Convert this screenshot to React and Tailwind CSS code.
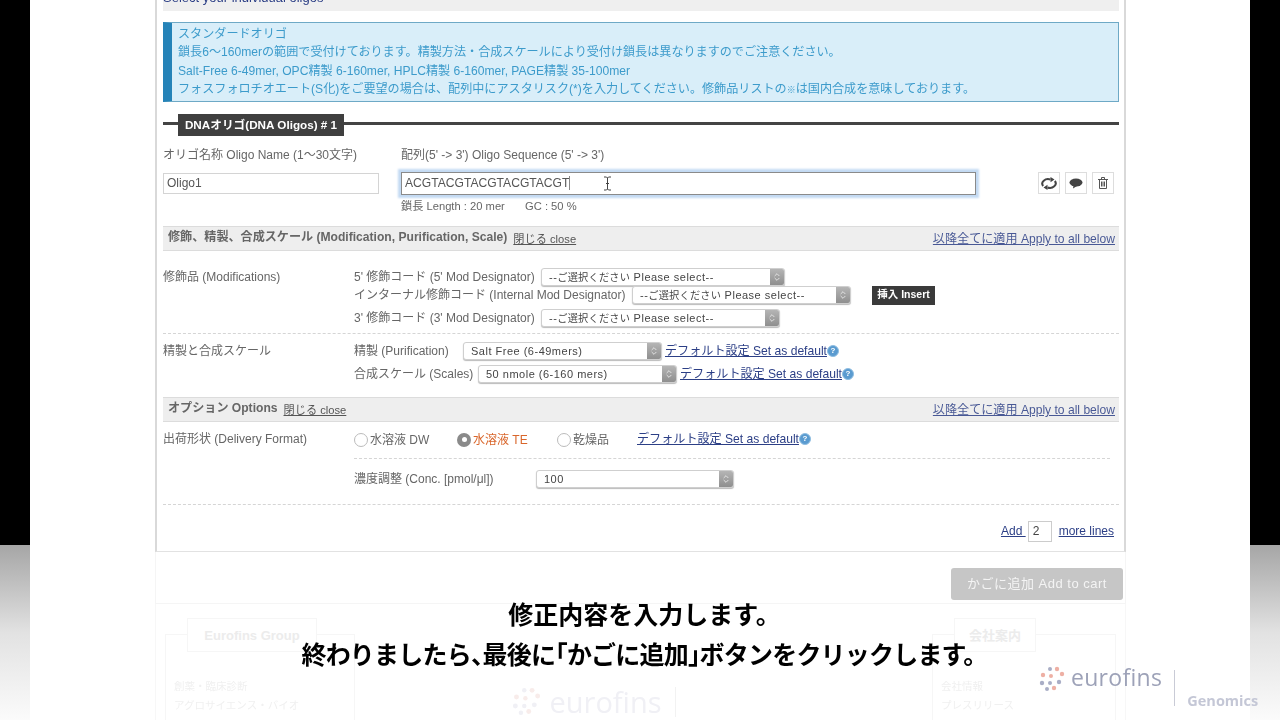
import { ChevronsUpDown } from "lucide-react";

const font = "font-['Liberation_Sans','Noto_Sans_CJK_JP',sans-serif]";
const linkClass = "text-[#2c3f86] underline";

function SideBar() {
  return (
    <div className="w-[30px] shrink-0 flex flex-col">
      <div className="h-[545px] bg-black" />
      <div className="flex-1 bg-gradient-to-b from-[#a6a6a6] via-[#e2e2e2] to-[#fbfbfb]" />
    </div>
  );
}

function Select({ width, children }) {
  return (
    <div
      className={`${width} h-[18px] flex bg-white border border-[#cfcfcf] rounded-[3px] overflow-hidden shrink-0 shadow-[0_1px_1px_#bbb]`}
    >
      <div className="flex-1 pl-[7px] text-[11px] leading-[16px] tracking-[0.5px] text-[#444] whitespace-nowrap overflow-hidden">
        {children}
      </div>
      <div className="w-[14px] bg-gradient-to-b from-[#b5b5b5] to-[#8f8f8f] flex items-center justify-center">
        <ChevronsUpDown size={10} strokeWidth={2} className="text-[#eee]" />
      </div>
    </div>
  );
}

function Placeholder() {
  return (
    <>
      --<span className="text-[10.2px] tracking-[0.2px]">ご選択ください</span> Please select--
    </>
  );
}

function Help() {
  return (
    <span className="inline-flex w-[12px] h-[12px] rounded-full bg-[#5a9bd0] border border-[#8fbde0] text-white text-[8px] leading-none font-bold items-center justify-center">
      ?
    </span>
  );
}

function DefaultLink() {
  return (
    <span className="flex items-center whitespace-nowrap text-[12.1px]">
      <a className={linkClass}>デフォルト設定 Set as default</a>
      <Help />
    </span>
  );
}

function SectionBar({ title, className }) {
  return (
    <div
      className={`h-[25px] bg-[#eeeeee] border-y border-[#dcdcdc] flex items-center justify-between pl-[5px] pr-[4px] ${className}`}
    >
      <div className="flex items-center gap-[6px] whitespace-nowrap">
        <span className="font-bold text-[#666] text-[12.1px] mt-[-2px]">{title}</span>
        <a className="text-[#555] underline text-[11.2px] mt-[2px]">閉じる close</a>
      </div>
      <a className={`${linkClass} opacity-85 text-[12.1px] mt-[2px]`}>以降全てに適用 Apply to all below</a>
    </div>
  );
}

function Radio({ checked }) {
  return checked ? (
    <span className="w-[14px] h-[14px] rounded-full bg-[#8a8a8a] flex items-center justify-center shrink-0">
      <span className="w-[5px] h-[5px] rounded-full bg-white" />
    </span>
  ) : (
    <span className="w-[14px] h-[14px] rounded-full bg-white border border-[#bbb] shrink-0" />
  );
}

function IconButton({ children }) {
  return (
    <div className="w-[22px] h-[22px] border border-[#ddd] bg-white flex items-center justify-center">
      {children}
    </div>
  );
}

function Panel() {
  return (
    <div className="w-[971px] h-[552px] border-x-2 border-b border-x-[#d9d9d9] border-b-[#e2e2e2] pl-[6px] pr-[5px] text-[12px] text-[#666]">
      <div className="h-[11px] bg-[#efefef] overflow-hidden">
        <p className="mt-[-10px] text-[#2c3f86] text-[13px] leading-[15px]">Select your individual oligos</p>
      </div>

      <div className="mt-[11px] h-[80px] bg-[#d9eef9] border border-[#6ea9c6] border-l-[9px] border-l-[#2583b8] pl-[6px] pt-[2px] text-[#3c9bcb] text-[12.1px] leading-[18.3px]">
        <p>スタンダードオリゴ</p>
        <p>鎖長6〜160merの範囲で受付けております。精製方法・合成スケールにより受付け鎖長は異なりますのでご注意ください。</p>
        <p>Salt-Free 6-49mer, OPC精製 6-160mer, HPLC精製 6-160mer, PAGE精製 35-100mer</p>
        <p>
          フォスフォロチオエート(S化)をご要望の場合は、配列中にアスタリスク(*)を入力してください。修飾品リストの
          <span className="text-[9px]">※</span>は国内合成を意味しております。
        </p>
      </div>

      <div className="mt-[12px] h-[22px] flex items-start">
        <div className="w-[15px] h-[3px] mt-[8px] bg-[#444]" />
        <div className="w-[166px] h-[22px] bg-[#3f3f3f] text-white text-[11.7px] font-bold flex items-center justify-center whitespace-nowrap">
          DNAオリゴ(DNA Oligos) # 1
        </div>
        <div className="flex-1 h-[3px] mt-[8px] bg-[#444]" />
      </div>

      <div className="mt-[9px] h-[20px] flex items-center">
        <span className="w-[238px] whitespace-nowrap">オリゴ名称 Oligo Name (1〜30文字)</span>
        <span className="whitespace-nowrap">配列(5' -&gt; 3') Oligo Sequence (5' -&gt; 3')</span>
      </div>

      <div className="mt-[7px] h-[22px] flex items-center">
        <input
          readOnly
          value="Oligo1"
          className="w-[216px] h-[21px] border border-[#d4d4d4] bg-white px-[3px] text-[12px] text-[#555] outline-none"
        />
        <div className="relative ml-[22px] w-[575px] h-[23px] border border-[#8a8a8a] bg-white px-[3px] text-[12.1px] leading-[21px] text-[#555] shadow-[0_0_2px_3px_#c3daf3] whitespace-nowrap">
          ACGTACGTACGTACGTACGT
          <span className="inline-block w-px h-[14px] bg-[#888] align-middle" />
          <svg className="absolute left-[201px] top-[3px]" width="9" height="15" viewBox="0 0 9 15" fill="none" stroke="#444" strokeWidth="1">
            <path d="M1 1h2.500L4.500 2 5.500 1H8M4.500 2v11M1 14h2.500l1-1 1 1H8M3 7.500h3" />
          </svg>
        </div>
        <div className="ml-[62px] flex gap-[5px]">
          <IconButton>
            <svg width="16" height="13" viewBox="0 0 16 13" fill="none" stroke="#444" strokeWidth="2">
              <path d="M2.200 9A5.800 4.500 0 0 1 9.500 2.500" />
              <path d="M13.800 4A5.800 4.500 0 0 1 6.500 10.500" />
              <path d="M9.500 0l4 2.600-4 2.600zM6.500 7.800l-4 2.600 4 2.600z" fill="#444" stroke="none" />
            </svg>
          </IconButton>
          <IconButton>
            <svg width="14" height="11" viewBox="0 0 14 11" fill="#444">
              <ellipse cx="7" cy="4.500" rx="6.500" ry="4" />
              <path d="M4.500 7.500L4 10.500 8 8z" />
            </svg>
          </IconButton>
          <IconButton>
            <svg width="10" height="12" viewBox="0 0 10 12" fill="none" stroke="#555" strokeWidth="1">
              <path d="M0 2.500h10M3.500 2.500V.5h3v2M1.500 2.500v9h7v-9M3.500 4.500v5M5 4.500v5M6.500 4.500v5" />
            </svg>
          </IconButton>
        </div>
      </div>

      <div className="mt-[4px] h-[16px] ml-[238px] flex items-center text-[11.200px] whitespace-nowrap">
        <span className="w-[124px]">鎖長 Length : 20 mer</span>
        <span>GC : 50 %</span>
      </div>

      <SectionBar title="修飾、精製、合成スケール (Modification, Purification, Scale)" className="mt-[12px]" />

      <div className="mt-[16px] flex border-b border-dashed border-[#d5d5d5] h-[67px]">
        <span className="w-[191px] h-[20px] leading-[20px]">修飾品 (Modifications)</span>
        <div>
          <div className="h-[19px] flex items-center">
            <span className="w-[187px] whitespace-nowrap">5' 修飾コード (5' Mod Designator)</span>
            <Select width="w-[244px]"><Placeholder /></Select>
          </div>
          <div className="h-[18px] flex items-center">
            <span className="w-[278px] whitespace-nowrap">インターナル修飾コード (Internal Mod Designator)</span>
            <Select width="w-[219px]"><Placeholder /></Select>
            <span className="ml-[21px] h-[19px] w-[63px] bg-[#3a3a3a] text-white text-[10.5px] font-bold flex items-center justify-center whitespace-nowrap">
              挿入 Insert
            </span>
          </div>
          <div className="mt-[5px] h-[18px] flex items-center">
            <span className="w-[187px] whitespace-nowrap">3' 修飾コード (3' Mod Designator)</span>
            <Select width="w-[239px]"><Placeholder /></Select>
          </div>
        </div>
      </div>

      <div className="mt-[8px] flex h-[41px]">
        <span className="w-[191px] h-[18px] leading-[18px]">精製と合成スケール</span>
        <div className="flex flex-col gap-[5px]">
          <div className="h-[18px] flex items-center">
            <span className="w-[109px] whitespace-nowrap">精製 (Purification)</span>
            <Select width="w-[199px]">Salt Free (6-49mers)</Select>
            <span className="ml-[3px]"><DefaultLink /></span>
          </div>
          <div className="h-[18px] flex items-center">
            <span className="w-[124px] whitespace-nowrap">合成スケール (Scales)</span>
            <Select width="w-[199px]">50 nmole (6-160 mers)</Select>
            <span className="ml-[3px]"><DefaultLink /></span>
          </div>
        </div>
      </div>

      <SectionBar title="オプション Options" className="mt-[14px]" />

      <div className="mt-[8px] flex h-[29px] border-b-0">
        <span className="w-[191px] h-[19px] leading-[19px] whitespace-nowrap">出荷形状 (Delivery Format)</span>
        <div className="w-[756px] h-[29px] border-b border-dashed border-[#d5d5d5] flex items-start">
          <div className="h-[19px] flex items-center gap-[2px] w-[103px] whitespace-nowrap"><Radio />水溶液 DW</div>
          <div className="h-[19px] flex items-center gap-[2px] w-[100px] whitespace-nowrap text-[#d9662b]"><Radio checked />水溶液 TE</div>
          <div className="h-[19px] flex items-center gap-[2px] w-[80px] whitespace-nowrap"><Radio />乾燥品</div>
          <div className="h-[19px] flex items-center"><DefaultLink /></div>
        </div>
      </div>

      <div className="mt-[11px] h-[18px] ml-[191px] flex items-center">
        <span className="w-[182px] whitespace-nowrap">濃度調整 (Conc. [pmol/μl])</span>
        <Select width="w-[198px]">100</Select>
      </div>

      <div className="mt-[16px] border-b border-dashed border-[#d5d5d5]" />

      <div className="mt-[15px] h-[22px] flex items-center justify-end pr-[5px] whitespace-nowrap">
        <a className={linkClass}>Add&nbsp;</a>
        <input
          readOnly
          value="2"
          className="w-[24px] h-[21px] ml-[2px] mr-[7px] border border-[#ccc] bg-white px-[4px] text-[12px] text-[#444] outline-none"
        />
        <a className={linkClass}>more lines</a>
      </div>
    </div>
  );
}

function FooterBox({ tab, tabWidth, width, lines }) {
  return (
    <div className={`${width} h-[86px] border border-b-0 border-[#f6f6f6] mt-[30px] pl-[8px] pt-[42px] text-[10.5px] leading-[19px] text-[#f0f0f0] relative`}>
      <div className={`absolute left-[21px] top-[-17px] ${tabWidth} h-[34px] border border-[#f6f6f6] bg-white flex items-center justify-center font-bold text-[13px] text-[#ececec]`}>
        {tab}
      </div>
      {lines.map((line) => (
        <p key={line}>{line}</p>
      ))}
    </div>
  );
}

function LogoDots({ size, pink, blue }) {
  return (
    <svg width={size} height={size} viewBox="0 0 26 26">
      <circle cx="11" cy="3" r="2" fill={blue} />
      <circle cx="18" cy="3" r="2.200" fill={pink} />
      <circle cx="23" cy="8" r="2.200" fill={pink} />
      <circle cx="4" cy="9" r="2.200" fill={pink} />
      <circle cx="12" cy="10" r="2" fill={pink} />
      <circle cx="3" cy="17" r="2.200" fill={blue} />
      <circle cx="11" cy="17" r="2" fill={blue} />
      <circle cx="20" cy="16" r="2.200" fill={blue} />
      <circle cx="8" cy="23" r="2" fill={blue} />
      <circle cx="15" cy="22" r="2.200" fill={pink} />
    </svg>
  );
}

export default function App() {
  return (
    <div className={`relative w-[1280px] h-[720px] overflow-hidden flex bg-white ${font}`}>
      <SideBar />
      <main className="flex-1 pl-[125px] blur-[0.5px]">
        <Panel />
        <div className="w-[971px] h-[52px] border-x border-b border-[#f5f5f5] flex justify-end items-start pt-[16px] pr-[2px]">
          <button className="w-[172px] h-[32px] bg-[#c6c6c6] rounded-[3px] text-white/80 text-[13px] tracking-[0.5px] whitespace-nowrap">
            かごに追加 Add to cart
          </button>
        </div>
        <div className="w-[971px] h-[116px] border-x border-[#f7f7f7] flex justify-between px-[9px]">
          <FooterBox
            tab="Eurofins Group"
            tabWidth="w-[130px]"
            width="w-[190px]"
            lines={["創薬・臨床診断", "アグロサイエンス・バイオ"]}
          />
          <div className="mt-[79px] mr-[99px] flex items-center gap-[8px] text-[#f0f0f5] text-[29px] leading-[30px] font-['Open_Sans',sans-serif]">
            <LogoDots size={29} pink="#f8ecea" blue="#f0f0f5" />
            eurofins
            <div className="ml-[5px] w-px h-[30px] bg-[#f2f2f2]" />
          </div>
          <FooterBox
            tab="会社案内"
            tabWidth="w-[82px]"
            width="w-[184px]"
            lines={["会社情報", "プレスリリース"]}
          />
        </div>
      </main>
      <SideBar />

      <div className="absolute left-0 right-0 top-[593px] pl-[9px] text-center text-black font-bold text-[25px] leading-[40px] font-['Noto_Sans_CJK_JP',sans-serif] blur-[0.3px]">
        <p>修正内容を入力します。</p>
        <p className="tracking-[-0.8px]">
          終わりましたら<span className="[font-feature-settings:'halt']">、</span>最後に
          <span className="[font-feature-settings:'halt']">「</span>かごに追加
          <span className="[font-feature-settings:'halt']">」</span>ボタンをクリックします。
        </p>
      </div>

      <div className="absolute left-[1039px] top-[664px] flex items-start blur-[0.3px]">
        <div className="mt-[2px]">
          <LogoDots size={26} pink="#eeb0a4" blue="#a9aec6" />
        </div>
        <span className="ml-[6px] text-[#9da2b8] text-[23px] leading-[26px] tracking-[0.3px] font-['Open_Sans',sans-serif]">eurofins</span>
        <div className="ml-[12px] mt-[6px] w-px h-[36px] bg-[#c9cbd6]" />
        <span className="ml-[12px] mt-[29px] text-[#c4c7d6] text-[14.500px] leading-[16px] font-bold font-['Open_Sans',sans-serif]">Genomics</span>
      </div>
    </div>
  );
}
